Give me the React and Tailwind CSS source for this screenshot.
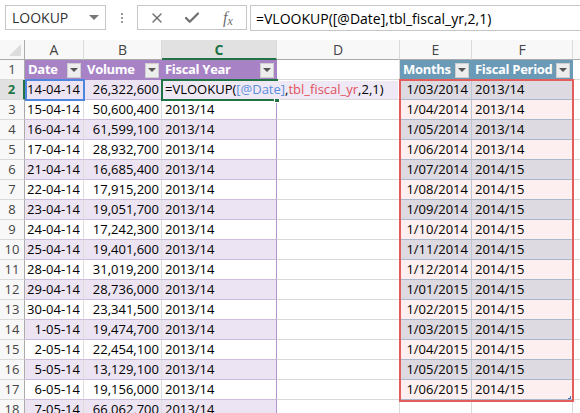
import React from 'react';
import { X, Check } from 'lucide-react';

const dates = [
  ['14-04-14', '26,322,600'],
  ['15-04-14', '50,600,400'],
  ['16-04-14', '61,599,100'],
  ['17-04-14', '28,932,700'],
  ['21-04-14', '16,685,400'],
  ['22-04-14', '17,915,200'],
  ['23-04-14', '19,051,700'],
  ['24-04-14', '17,242,300'],
  ['25-04-14', '19,401,600'],
  ['28-04-14', '31,019,200'],
  ['29-04-14', '28,736,000'],
  ['30-04-14', '23,341,500'],
  ['1-05-14', '19,474,700'],
  ['2-05-14', '22,454,100'],
  ['5-05-14', '13,129,100'],
  ['6-05-14', '19,156,000'],
  ['7-05-14', '66,062,700'],
];

const months = [
  ['1/03/2014', '2013/14'],
  ['1/04/2014', '2013/14'],
  ['1/05/2014', '2013/14'],
  ['1/06/2014', '2013/14'],
  ['1/07/2014', '2014/15'],
  ['1/08/2014', '2014/15'],
  ['1/09/2014', '2014/15'],
  ['1/10/2014', '2014/15'],
  ['1/11/2014', '2014/15'],
  ['1/12/2014', '2014/15'],
  ['1/01/2015', '2014/15'],
  ['1/02/2015', '2014/15'],
  ['1/03/2015', '2014/15'],
  ['1/04/2015', '2014/15'],
  ['1/05/2015', '2014/15'],
  ['1/06/2015', '2014/15'],
];

const Drop = () => (
  <span className="flex h-[15px] w-[14px] shrink-0 items-center justify-center border border-[#cfcfcf] bg-[#ededed]">
    <span className="h-0 w-0 border-x-[4px] border-t-[4px] border-x-transparent border-t-[#555]" />
  </span>
);

const grid = 'grid grid-cols-[25px_59px_78px_115px_123px_72px_101px_7px] grid-rows-[20px]';
const head = 'flex items-center justify-between overflow-hidden whitespace-nowrap pl-[3px] pr-[3px] font-bold tracking-[-0.3px] text-white';

const FormulaText = () => (
  <>
    =VLOOKUP(<span className="text-[#5b8fdc]">[@Date]</span>,<span className="text-[#e0525c]">tbl_fiscal_yr</span>,2,1)
  </>
);

export default function App() {
  return (
    <div className="h-[413px] w-[580px] overflow-hidden bg-white text-[13px] text-black" style={{ fontFamily: '"Open Sans", "Liberation Sans", sans-serif' }}>
      {/* formula bar */}
      <div className="flex h-10 items-start pt-[5px]">
        <div className="ml-[5px] flex h-[25px] w-[101px] items-center justify-between border border-[#c6c6c6] pl-[6px] pr-[6px] text-[14px] text-[#333]">
          <span>LOOKUP</span>
          <span className="h-0 w-0 border-x-[5px] border-t-[5px] border-x-transparent border-t-[#777]" />
        </div>
        <div className="flex h-[25px] w-[31px] flex-col items-center justify-center gap-[2px]">
          <span className="h-[2px] w-[2px] bg-[#999]" />
          <span className="h-[2px] w-[2px] bg-[#999]" />
          <span className="h-[2px] w-[2px] bg-[#999]" />
        </div>
        <div className="flex h-[25px] w-[110px] items-center border border-[#c6c6c6] text-[#6f6f6f]">
          <span className="flex w-[36px] justify-center pl-[2px]"><X size={16} strokeWidth={2} /></span>
          <span className="flex w-[36px] justify-center"><Check size={18} strokeWidth={3} /></span>
          <span className="flex w-[36px] items-end justify-center text-[16px] italic leading-none" style={{ fontFamily: '"Liberation Serif", serif' }}>
            f<span className="relative top-[1px] text-[12px] leading-none">x</span>
          </span>
        </div>
        <div className="ml-[3px] flex h-[26px] flex-1 items-center border-y border-l border-[#c6c6c6] pl-[5px] text-[14px]">
          =VLOOKUP([@Date],tbl_fiscal_yr,2,1)
        </div>
      </div>

      {/* sheet */}
      <div className="relative">
        {/* column headers */}
        <div className={`${grid} text-[14px] text-[#444]`}>
          <div className="relative border-r border-b border-[#ababab] bg-[#f8f8f8]">
            <span className="absolute bottom-[3px] right-[3px] h-0 w-0 border-b-[12px] border-l-[12px] border-b-[#dcdcdc] border-l-transparent" />
          </div>
          <div className="flex items-center justify-center border-r border-b border-r-[#dadada] border-b-[#ababab] bg-[#f8f8f8]">A</div>
          <div className="flex items-center justify-center border-r border-b border-r-[#dadada] border-b-[#ababab] bg-[#f8f8f8]">B</div>
          <div className="flex items-center justify-center border-r border-b-2 border-r-[#dadada] border-b-[#217346] bg-[#e1e1e1] font-bold text-[#217346]">C</div>
          <div className="flex items-center justify-center border-r border-b border-r-[#dadada] border-b-[#ababab] bg-[#f8f8f8]">D</div>
          <div className="flex items-center justify-center border-r border-b border-r-[#dadada] border-b-[#ababab] bg-[#f8f8f8]">E</div>
          <div className="flex items-center justify-center border-r border-b border-r-[#dadada] border-b-[#ababab] bg-[#f8f8f8]">F</div>
          <div className="border-b border-[#ababab] bg-[#f8f8f8]" />
        </div>

        {/* row 1 headers */}
        <div className={grid}>
          <div className="flex items-center justify-center border-r border-b border-r-[#ababab] border-b-[#dadada] bg-[#f8f8f8] text-[#444]">1</div>
          <div className={`${head} bg-[#a783c6]`}>Date<Drop /></div>
          <div className={`${head} bg-[#a783c6]`}>Volume<Drop /></div>
          <div className={`${head} bg-[#a783c6]`}>Fiscal Year<Drop /></div>
          <div className="border-r border-b border-[#d9d9d9]" />
          <div className={`${head} bg-[#6b9ab7]`}>Months<Drop /></div>
          <div className={`${head} bg-[#6b9ab7]`}>Fiscal Period<Drop /></div>
          <div className="border-b border-[#d9d9d9]" />
        </div>

        {/* data rows */}
        {dates.map(([d, v], i) => {
          const n = i + 2;
          const band = n % 2 === 0 ? 'bg-[#ece4f3]' : 'bg-white';
          const m = months[i];
          const mband = n % 2 === 0 ? 'bg-[#dedae1]' : 'bg-[#fdefef]';
          const sel = n === 2;
          return (
            <div key={n} className={grid}>
              <div
                className={`flex items-center justify-center border-b ${
                  sel
                    ? 'border-r-2 border-r-[#217346] border-b-[#dadada] bg-[#e1e1e1] font-bold text-[#217346]'
                    : 'border-r border-r-[#ababab] border-b-[#dadada] bg-[#f8f8f8] text-[#444]'
                }`}
              >
                {n}
              </div>
              <div className={`flex items-center justify-end border-r border-b border-r-[#dcdcdc] border-b-[#cdbcdb] pr-[3px] ${band}`}>{d}</div>
              <div className={`flex items-center justify-end border-r border-b border-r-[#dcdcdc] border-b-[#cdbcdb] pr-[2px] ${band}`}>{v}</div>
              <div className={`flex items-center border-r border-b border-r-[#b596cc] border-b-[#cdbcdb] pl-[3px] ${band}`}>{sel ? '' : '2013/14'}</div>
              <div className="border-r border-b border-[#d9d9d9]" />
              {m ? (
                <>
                  <div className={`flex items-center justify-end border-r border-b border-r-[#bcc6d2] border-b-[#a9b7c8] pr-[3px] ${mband}`}>{m[0]}</div>
                  <div className={`flex items-center border-r border-b border-r-[#bcc6d2] border-b-[#a9b7c8] pl-[3px] ${mband}`}>{m[1]}</div>
                </>
              ) : (
                <>
                  <div className="border-r border-b border-[#d9d9d9]" />
                  <div className="border-r border-b border-[#d9d9d9]" />
                </>
              )}
              <div className="border-b border-[#d9d9d9]" />
            </div>
          );
        })}

        {/* reference highlight on A2 */}
        <div className="absolute left-[25px] top-[39px] h-[22px] w-[60px] border-2 border-[#4f86dd]" />

        {/* active cell C2 */}
        <div className="absolute left-[161px] top-[39px] h-[22px] w-[117px] border-2 border-[#217346]">
          <span className="absolute -bottom-[4px] -right-[4px] h-[6px] w-[6px] border border-white bg-[#217346]" />
        </div>

        {/* in-cell editor */}
        <div className="absolute left-[163px] top-[41px] flex h-[18px] w-[235px] items-center whitespace-nowrap bg-[#efe8f5] pl-[2px]">
          <FormulaText />
        </div>

        {/* reference highlight on E:F */}
        <div className="absolute left-[399px] top-[39px] h-[323px] w-[175px] border-2 border-[#e35d5d]">
          <span className="absolute bottom-[1px] right-[1px] h-[3px] w-[3px] border-r border-b border-[#3b6fc4]" />
        </div>
      </div>
    </div>
  );
}
